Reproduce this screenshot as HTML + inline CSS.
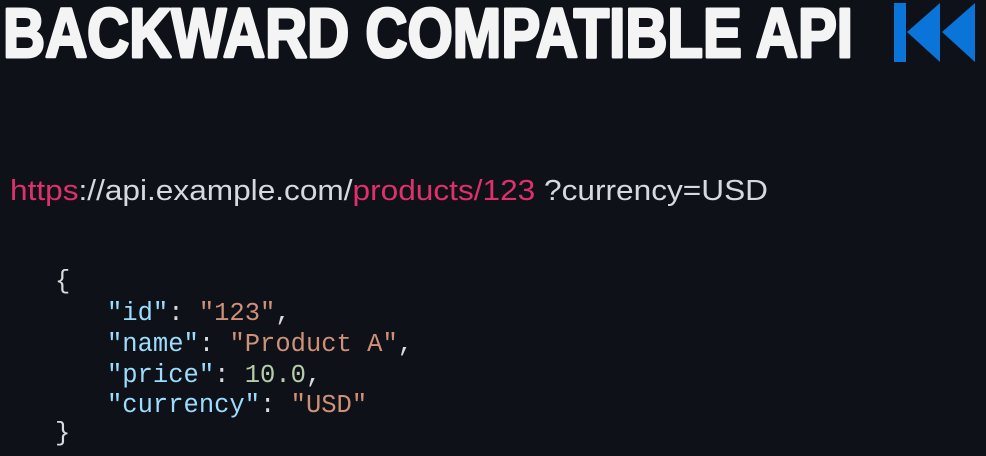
<!DOCTYPE html>
<html><head><style>
html,body{margin:0;padding:0;background:#0e1117;width:986px;height:456px;overflow:hidden}
svg{display:block}
</style></head><body>
<svg width="986" height="456" viewBox="0 0 986 456" xmlns="http://www.w3.org/2000/svg">
<rect width="986" height="456" fill="#0e1117"/>
<text x="3" y="57" font-family="Liberation Sans, sans-serif" font-weight="bold" font-size="70" fill="#f4f4f4" stroke="#f4f4f4" stroke-width="3" stroke-linejoin="round" textLength="850" lengthAdjust="spacingAndGlyphs">BACKWARD COMPATIBLE API</text>
<rect x="894" y="3" width="12" height="59" fill="#0a74d8"/>
<polygon points="940,3 940,62 907,32" fill="#0a74d8"/>
<polygon points="975,3 975,62 942,32" fill="#0a74d8"/>
<text x="10" y="200" font-family="Liberation Sans, sans-serif" font-size="29" fill="#d6d9de" textLength="758" lengthAdjust="spacingAndGlyphs"><tspan fill="#e0306c">https</tspan>://api.example.com/<tspan fill="#e0306c">products/123</tspan> ?currency=USD</text>
<g font-family="Liberation Mono, monospace" font-size="25.5" fill="#d8dadd">
<text x="55" y="288">{</text>
<text x="107" y="320"><tspan fill="#9cdcfe">"id"</tspan>: <tspan fill="#ce9178">"123"</tspan>,</text>
<text x="107" y="351"><tspan fill="#9cdcfe">"name"</tspan>: <tspan fill="#ce9178">"Product A"</tspan>,</text>
<text x="107" y="382"><tspan fill="#9cdcfe">"price"</tspan>: <tspan fill="#b5cea8">10.0</tspan>,</text>
<text x="107" y="412"><tspan fill="#9cdcfe">"currency"</tspan>: <tspan fill="#ce9178">"USD"</tspan></text>
<text x="55" y="440">}</text>
</g>
</svg>
</body></html>
